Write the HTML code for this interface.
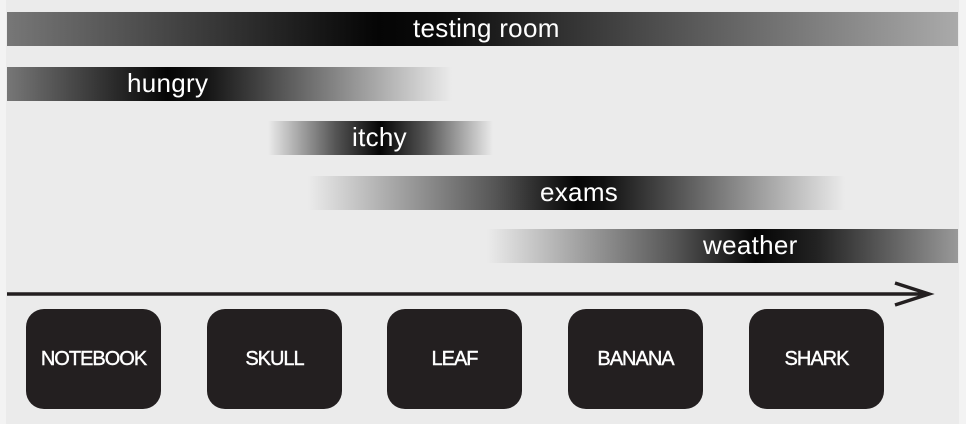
<!DOCTYPE html>
<html><head><style>
body{margin:0;width:966px;height:424px;background:#ebebeb;position:relative;overflow:hidden;font-family:"Liberation Sans",sans-serif}
.edge{position:absolute;top:0;bottom:0;background:#f3f3f3}
.bar{position:absolute;height:34px;color:#fff;font-size:26px;line-height:32px;white-space:nowrap;letter-spacing:0.3px}
.bar span{position:absolute;top:0}
.box{position:absolute;top:309px;width:135px;height:100px;border-radius:18px;background:#231f20;color:#fff;font-size:20px;letter-spacing:-1px;display:flex;align-items:center;justify-content:center;-webkit-text-stroke:0.4px #fff}
</style></head><body>
<div class="edge" style="left:0;width:6px"></div>
<div class="edge" style="left:959px;width:7px"></div>
<div class="bar" style="left:7px;top:12px;width:951px;background:linear-gradient(90deg,#777 0%,#050505 39%,#0a0a0a 45%,#aaa 100%)"><span style="left:406px">testing room</span></div>
<div class="bar" style="left:7px;top:67px;width:445px;background:linear-gradient(90deg,#777 0%,#050505 36%,#151515 45%,#ebebeb 100%)"><span style="left:120px">hungry</span></div>
<div class="bar" style="left:268px;top:121px;width:225px;background:linear-gradient(90deg,#ebebeb 0%,#555 30%,#050505 50%,#555 70%,#ebebeb 100%)"><span style="left:84px">itchy</span></div>
<div class="bar" style="left:308px;top:176px;width:537px;background:linear-gradient(90deg,#ebebeb 0%,#555 35%,#050505 50%,#111 55%,#ebebeb 100%)"><span style="left:232px">exams</span></div>
<div class="bar" style="left:487px;top:229px;width:471px;background:linear-gradient(90deg,#ebebeb 0%,#555 40%,#050505 57%,#222 70%,#999 100%)"><span style="left:216px">weather</span></div>
<svg style="position:absolute;left:0;top:0" width="966" height="424"><path d="M7 294H929M895 283L929 294L895 305" stroke="#231f20" stroke-width="3.5" fill="none"/></svg>
<div class="box" style="left:26px">NOTEBOOK</div>
<div class="box" style="left:207px">SKULL</div>
<div class="box" style="left:387px">LEAF</div>
<div class="box" style="left:568px">BANANA</div>
<div class="box" style="left:749px">SHARK</div>
</body></html>
